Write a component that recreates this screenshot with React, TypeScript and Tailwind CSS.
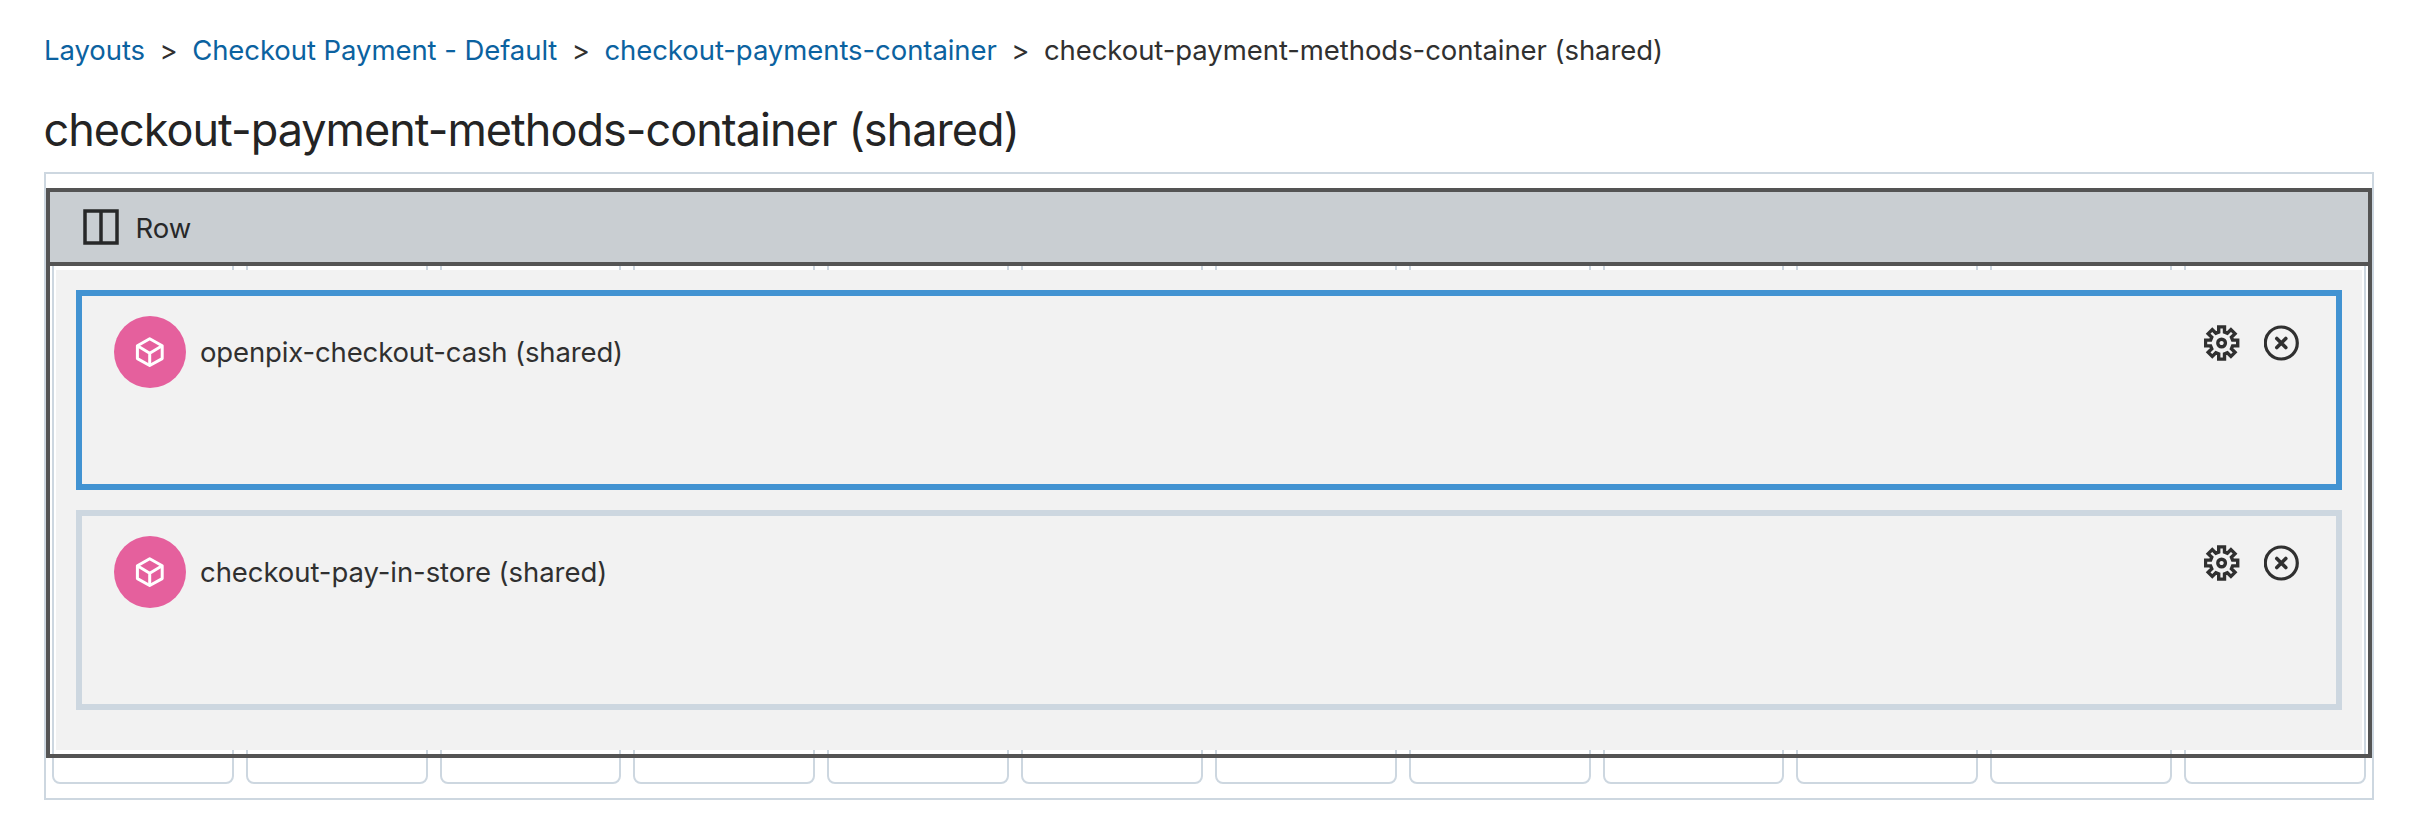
function RowIcon() {
  return (
    <svg className="size-9 shrink-0" viewBox="0 0 36 36" fill="none" stroke="#272829" strokeWidth="3.5">
      <rect x="2" y="2" width="32" height="32" />
      <path d="M18 2v32" />
    </svg>
  );
}

function CubeIcon() {
  return (
    <svg className="size-9" viewBox="-18 -18 36 36" fill="none" stroke="#fff" strokeWidth="3" strokeLinejoin="round">
      <path d="M-.3 -13.3 L12.2 -6.2 V6.6 L-.3 13.5 L-12.6 6.6 V-6.2 Z" />
      <path d="M-12.6 -6.2 L-.3 1.2 L12.2 -6.2 M-.3 1.2 V13.5" />
    </svg>
  );
}

const toothCorners: [number, number][] = [
  [-2.9, -11],
  [-2.9, -16.1],
  [2.9, -16.1],
  [2.9, -11],
];

const gearPoints = Array.from({ length: 8 }, (_, k) => {
  const a = (k * Math.PI) / 4;
  return toothCorners
    .map(([x, y]) => {
      const px = x * Math.cos(a) - y * Math.sin(a);
      const py = x * Math.sin(a) + y * Math.cos(a);
      return `${px.toFixed(2)},${py.toFixed(2)}`;
    })
    .join(" ");
}).join(" ");

function GearIcon() {
  return (
    <svg className="size-9" viewBox="-17.6 -18 36 36" fill="none" stroke="#303030" strokeWidth="3.4">
      <polygon points={gearPoints} />
      <circle r="3.8" />
    </svg>
  );
}

function RemoveIcon() {
  return (
    <svg className="size-9" viewBox="-17.3 -18 36 36" fill="none" stroke="#303030" strokeWidth="3.2">
      <circle r="16" />
      <path d="M-4.5 -4.5 L4.5 4.5 M4.5 -4.5 L-4.5 4.5" strokeWidth="3.6" strokeLinecap="round" />
    </svg>
  );
}

function Widget({ name, style }: { name: string; style: string }) {
  return (
    <div className={`flex h-[200px] items-start justify-between border-[6px] pt-5 pr-9 pl-8 ${style}`}>
      <div className="flex items-center gap-[14px]">
        <div className="flex size-[72px] items-center justify-center rounded-full bg-[#e5609d]">
          <CubeIcon />
        </div>
        {name}
      </div>
      <div className="flex gap-6 pt-[9px]">
        <button type="button" aria-label="Settings">
          <GearIcon />
        </button>
        <button type="button" aria-label="Remove">
          <RemoveIcon />
        </button>
      </div>
    </div>
  );
}

const crumbs = ["Layouts", "Checkout Payment - Default", "checkout-payments-container"];

export default function App() {
  return (
    <div className="h-[824px] w-[2412px] bg-white pt-[30px] pr-[38px] pl-11 font-[Inter,sans-serif] text-[27.5px] leading-10 tracking-[-0.07px] whitespace-nowrap text-[#303030]">
      <nav className="flex gap-[14.5px]">
        {crumbs.map((c) => (
          <span key={c} className="flex gap-[14.5px]">
            <a className="text-[#0b62a0]">{c}</a>
            <span>&gt;</span>
          </span>
        ))}
        <span>checkout-payment-methods-container (shared)</span>
      </nav>
      <h1 className="-ml-[0.5px] mt-8 text-[45px] leading-[56px] tracking-[-0.99px] text-[#242424]">
        checkout-payment-methods-container (shared)
      </h1>

      <div className="mt-[14px] grid h-[628px] grid-cols-1 grid-rows-1 border-2 border-[#cdd7e0]">
        <div className="col-start-1 row-start-1 mx-1.5 mt-[14px] mb-[14px] grid grid-cols-12 gap-3">
          {Array.from({ length: 12 }, (_, i) => (
            <div key={i} className="rounded-lg border-2 border-[#cdd7e0]" />
          ))}
        </div>
        <section className="z-10 col-start-1 row-start-1 mt-[14px] flex h-[570px] flex-col border-4 border-[#545454]">
          <header className="flex h-[74px] items-center gap-[16.5px] border-b-4 border-[#545454] bg-[#c9ced2] pl-[33px] text-[#272829]">
            <RowIcon />
            <span className="pt-[2px]">Row</span>
          </header>
          <div className="mx-1.5 mt-1 flex h-[480px] flex-col gap-5 bg-[#f2f2f2] p-5">
            <Widget name="openpix-checkout-cash (shared)" style="border-[#4293d2] tracking-[-0.14px]" />
            <Widget name="checkout-pay-in-store (shared)" style="border-[#cdd7e0]" />
          </div>
        </section>
      </div>
    </div>
  );
}
